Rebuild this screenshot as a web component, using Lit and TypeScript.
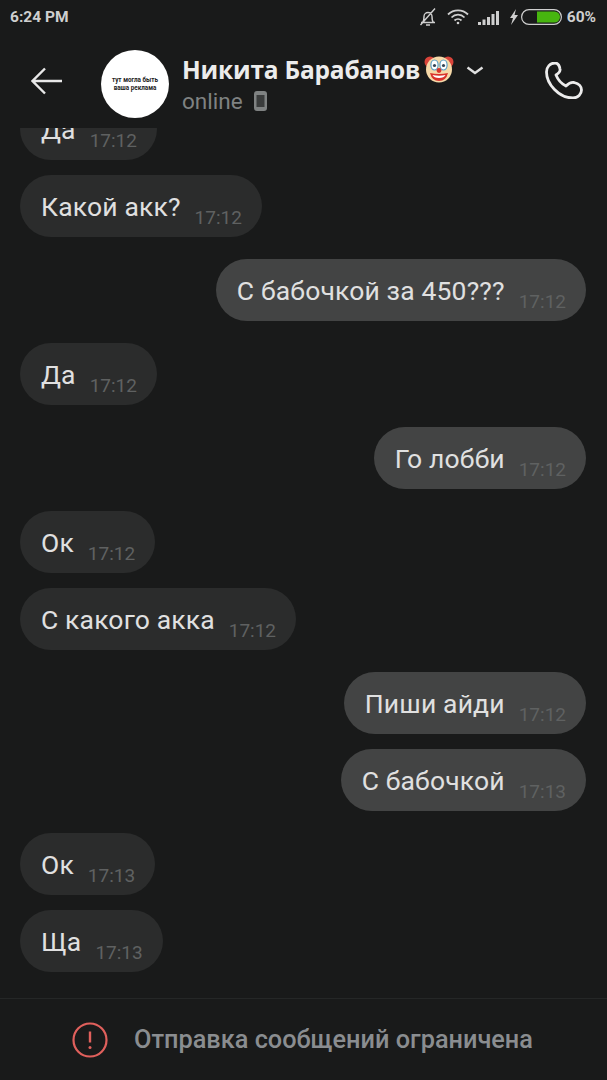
import { LitElement, html, css, svg } from "lit";
import { customElement } from "lit/decorators.js";

type Msg = { t: string; time: string; out?: boolean; gap: "same" | "turn" };
const msgs: Msg[] = [
  { t: "Да", time: "17:12", gap: "same" },
  { t: "Какой акк?", time: "17:12", gap: "same" },
  { t: "С бабочкой за 450???", time: "17:12", out: true, gap: "turn" },
  { t: "Да", time: "17:12", gap: "turn" },
  { t: "Го лобби", time: "17:12", out: true, gap: "turn" },
  { t: "Ок", time: "17:12", gap: "turn" },
  { t: "С какого акка", time: "17:12", gap: "same" },
  { t: "Пиши айди", time: "17:12", out: true, gap: "turn" },
  { t: "С бабочкой", time: "17:13", out: true, gap: "same" },
  { t: "Ок", time: "17:13", gap: "turn" },
  { t: "Ща", time: "17:13", gap: "same" },
];

const clown = svg`<svg class="clown" width="30" height="30" viewBox="0 0 30 30">
  <circle cx="6" cy="8" r="5.5" fill="#d9443a"/><circle cx="24" cy="8" r="5.5" fill="#d9443a"/>
  <circle cx="15" cy="15.500" r="13" fill="#f6d9a8"/>
  <ellipse cx="10.5" cy="11" rx="3.6" ry="5" fill="#fff" stroke="#5aa0c8" stroke-width="1.2"/>
  <ellipse cx="19.5" cy="11" rx="3.6" ry="5" fill="#fff" stroke="#5aa0c8" stroke-width="1.2"/>
  <circle cx="10.5" cy="11.5" r="1.6" fill="#345"/><circle cx="19.5" cy="11.5" r="1.6" fill="#345"/>
  <circle cx="15" cy="16.5" r="2.4" fill="#d9332c"/>
  <path d="M6 19 Q15 21 24 19 Q22 27 15 27 Q8 27 6 19Z" fill="#d9332c"/>
  <path d="M8.5 21 Q15 22.5 21.5 21 Q20 24 15 24 Q10 24 8.5 21Z" fill="#fff"/>
</svg>`;

@customElement("app-root")
export class AppRoot extends LitElement {
  static styles = css`
    :host { display: block; width: 607px; height: 1080px; background: #191a1a; color: #e6e6e6; font-family: Roboto, "Liberation Sans", sans-serif; overflow: hidden; }
    .page { height: 1080px; display: flex; flex-direction: column; }
    .top { height: 128px; flex: none; background: #191a1a; position: relative; z-index: 1; display: flex; flex-direction: column; }
    .status { height: 34px; flex: none; display: flex; align-items: center; justify-content: space-between; padding: 0 11px 0 10px; color: #cfcfcf; font-size: 15.5px; font-weight: 700; }
    .status-right { display: flex; align-items: center; }
    .nav { display: flex; align-items: flex-start; padding-top: 16px; position: relative; }
    .back { margin: 17px 0 0 31px; flex: none; }
    .avatar { width: 68px; height: 68px; flex: none; border-radius: 50%; background: #fff; margin-left: 38px; color: #222; font-size: 6.3px; font-weight: 700; line-height: 8px; display: flex; align-items: center; justify-content: center; text-align: center; }
    .who { margin: 2px 0 0 13px; }
    .name-row { display: flex; align-items: center; height: 34px; }
    .name { font-size: 24.5px; color: #ececec; letter-spacing: -0.2px; white-space: nowrap; font-family: "Open Sans", Roboto, sans-serif; font-weight: 700; }
    .clown { margin-left: 4px; }
    .chev { margin-left: 12px; margin-top: 3px; }
    .online { display: flex; align-items: center; gap: 11px; margin-top: 2px; font-size: 22.5px; color: #7f8282; }
    .phone { position: absolute; right: 24px; top: 28px; }
    .list { flex: 1; min-height: 0; display: flex; flex-direction: column; justify-content: flex-end; padding: 0 21px 26px 20px; }
    .row { display: flex; flex: none; }
    .row.same { margin-top: 15px; }
    .row.turn { margin-top: 22px; }
    .row.out { justify-content: flex-end; }
    .bubble { height: 62px; box-sizing: border-box; border-radius: 31px; background: #2b2c2c; padding: 0 20px 0 21px; display: flex; align-items: center; gap: 14px; }
    .out .bubble { background: #434444; }
    .text { font-size: 26.5px; color: #e0e0e0; white-space: nowrap; position: relative; letter-spacing: 0.15px; }
    .time { font-size: 19px; color: #5f6161; position: relative; top: 11px; }
    .foot { height: 82px; flex: none; border-top: 1px solid #252727; box-sizing: border-box; display: flex; align-items: center; justify-content: center; gap: 26px; padding-right: 2px; }
    .foot-text { font-size: 25.3px; font-weight: 500; color: #8a8d90; white-space: nowrap; }
  `;

  render() {
    return html`<div class="page">
      <div class="top">
        <div class="status">
          <span>6:24 PM</span>
          <div class="status-right">
            <svg width="18" height="20" viewBox="0 0 18 20" fill="none" stroke="#cfcfcf" stroke-width="1.4"><path d="M2 15.5h14M3.5 15.5c1.5-1.5 1.5-3 1.5-6a4 4 0 0 1 8 0c0 3 0 4.500 1.500 6M7 18h4M1.500 18L16 1.500"/></svg>
            <svg style="margin-left:10px" width="22" height="16" viewBox="0 0 22 16" fill="none" stroke="#cfcfcf" stroke-width="1.800"><path d="M1 5.500a14 14 0 0 1 20 0M4.500 8.500a9 9 0 0 1 13 0M7.500 11.500a5 5 0 0 1 7 0"/><circle cx="11" cy="14" r="1.300" fill="#cfcfcf" stroke="none"/></svg>
            <svg style="margin-left:9px" width="22" height="15" viewBox="0 0 22 15" fill="#cfcfcf"><rect x="0" y="12" width="3" height="3"/><rect x="4.500" y="9.500" width="3" height="5.500"/><rect x="9" y="7" width="3" height="8"/><rect x="13.500" y="4" width="3" height="11"/><rect x="18" y="1" width="3" height="14"/></svg>
            <svg style="margin-left:9px" width="9" height="16" viewBox="0 0 9 16" fill="#cfcfcf"><path d="M7 0L1 9h3l-2 7 7-10H5.500z"/></svg>
            <svg style="margin-left:3px" width="41" height="16" viewBox="0 0 41 16"><rect x="0.600" y="0.600" width="39.800" height="14.800" rx="7.400" fill="none" stroke="#cfcfcf" stroke-width="1.200"/><path d="M16 2.500h17.500a5.500 5.500 0 0 1 0 11H16z" fill="#47b50f"/></svg>
            <span style="margin-left:5px">60%</span>
          </div>
        </div>
        <div class="nav">
          <svg class="back" width="32" height="28" viewBox="0 0 32 28" fill="none" stroke="#e8e8e8" stroke-width="2.400"><path d="M31 14H2M14 1.500L1.500 14 14 26.500"/></svg>
          <div class="avatar"><div>тут могла быть<br>ваша реклама</div></div>
          <div class="who">
            <div class="name-row"><span class="name">Никита Барабанов</span>${clown}
              <svg class="chev" width="18" height="9" viewBox="0 0 18 9" fill="none" stroke="#e0e0e0" stroke-width="2.400"><path d="M1.500 1.500l7.500 5.500 7.500-5.500"/></svg>
            </div>
            <div class="online">online
              <svg width="13" height="20" viewBox="0 0 13 20"><rect width="13" height="20" rx="3" fill="#7f8282"/><rect x="2.500" y="4" width="8" height="12" fill="#3a3c3c"/></svg>
            </div>
          </div>
          <svg class="phone" width="38" height="37" viewBox="0 0 38 37" fill="none" stroke="#ececec" stroke-width="2.800" stroke-linejoin="round"><path d="M10 1C5 1 1.500 5 1.500 10C1.500 22 14 36 28 36C33 36 36.500 32 36.500 28C36.500 24 33 21.500 29 20.500C26 20 24 21 21 24C17 22 13 18 11 13C14 11 15.500 9 15 7C14.500 4 13 1 10 1Z"/></svg>
        </div>
      </div>
      <div class="list">
        ${msgs.map((m) => html`<div class="row ${m.gap} ${m.out ? "out" : ""}">
          <div class="bubble"><span class="text">${m.t}</span><span class="time">${m.time}</span></div>
        </div>`)}
      </div>
      <div class="foot">
        <svg width="36" height="36" viewBox="0 0 36 36" fill="none"><circle cx="18" cy="18" r="16.500" stroke="#e0605c" stroke-width="2.200"/><path d="M18 9.500v11" stroke="#e0605c" stroke-width="2.400"/><circle cx="18" cy="25.500" r="1.500" fill="#e0605c"/></svg>
        <span class="foot-text">Отправка сообщений ограничена</span>
      </div>
    </div>`;
  }
}
